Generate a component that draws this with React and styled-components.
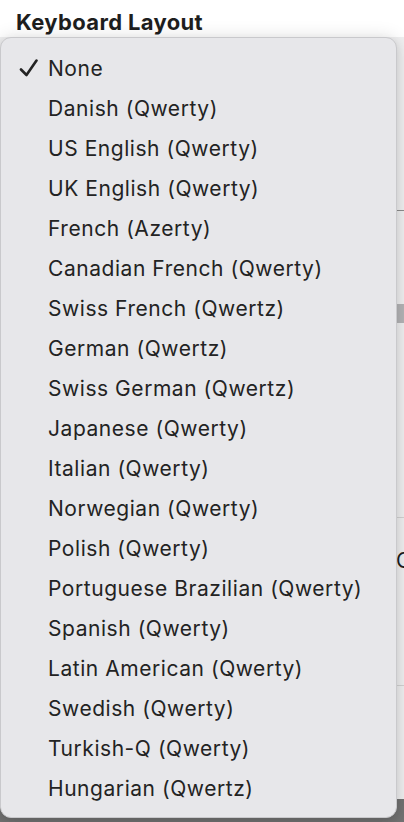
import React from 'react'
import styled, { createGlobalStyle } from 'styled-components'

const layouts = [
    'None',
    'Danish (Qwerty)',
    'US English (Qwerty)',
    'UK English (Qwerty)',
    'French (Azerty)',
    'Canadian French (Qwerty)',
    'Swiss French (Qwertz)',
    'German (Qwertz)',
    'Swiss German (Qwertz)',
    'Japanese (Qwerty)',
    'Italian (Qwerty)',
    'Norwegian (Qwerty)',
    'Polish (Qwerty)',
    'Portuguese Brazilian (Qwerty)',
    'Spanish (Qwerty)',
    'Latin American (Qwerty)',
    'Swedish (Qwerty)',
    'Turkish-Q (Qwerty)',
    'Hungarian (Qwertz)',
]

const GlobalStyle = createGlobalStyle`
    html, body {
        margin: 0;
        padding: 0;
        background: #ffffff;
    }
    body {
        font-family: Inter, "Liberation Sans", sans-serif;
        -webkit-font-smoothing: antialiased;
    }
`

const CheckIcon = () => (
    <svg width="20" height="18" viewBox="0 0 20 18">
        <path d="M2 10.5 L7.5 16 L17.5 1.5" fill="none" stroke="#232323" strokeWidth="2.6" strokeLinecap="round" strokeLinejoin="round" />
    </svg>
)

export default function App() {
    const selected = 'None'
    return (
        <Screen>
            <GlobalStyle />
            <Backdrop>
                <Header>
                    <Title>Keyboard Layout</Title>
                </Header>
                <Section $height={173} $line="#8d8d8d" />
                <Spacer $height={93} />
                <Slider />
                <Section $height={194} $line="#d2d2d2" />
                <FieldRow>
                    <FieldLabel>C</FieldLabel>
                </FieldRow>
                <Section $height={83} $line="#d2d2d2" />
                <Spacer $height={113} />
                <Footer />
            </Backdrop>
            <Menu>
                {layouts.map((name) => (
                    <MenuItem key={name}>
                        <CheckSlot>{name === selected && <CheckIcon />}</CheckSlot>
                        <ItemLabel>{name}</ItemLabel>
                    </MenuItem>
                ))}
            </Menu>
        </Screen>
    )
}

const Screen = styled.div`
    position: relative;
    width: 404px;
    height: 822px;
    overflow: hidden;
`

const Backdrop = styled.div`
    display: flex;
    flex-direction: column;
    height: 100%;
    background: #efeff0;
`

const Header = styled.div`
    height: 37px;
    flex-shrink: 0;
    background: #ffffff;
    padding-left: 16px;
    box-sizing: border-box;
`

const Title = styled.div`
    font-size: 22px;
    font-weight: 700;
    color: #1e1e1e;
    line-height: 1;
    padding-top: 11px;
    letter-spacing: 0.35px;
`

const Section = styled.div`
    height: ${(p) => p.$height}px;
    flex-shrink: 0;
    border-bottom: 1px solid ${(p) => p.$line};
`

const Spacer = styled.div`
    height: ${(p) => p.$height}px;
    flex-shrink: 0;
`

const Slider = styled.div`
    height: 19px;
    flex-shrink: 0;
    background: #b4b4b6;
`

const FieldRow = styled.div`
    height: 84px;
    display: flex;
    align-items: center;
    padding-left: 396px;
    flex-shrink: 0;
    box-sizing: border-box;
`

const FieldLabel = styled.span`
    font-size: 21px;
    color: #1e1e1e;
    white-space: nowrap;
`

const Footer = styled.div`
    flex: 1;
    background: #727272;
`

const Menu = styled.div`
    position: absolute;
    top: 37px;
    left: 0;
    width: 397px;
    height: 781px;
    box-sizing: border-box;
    padding: 10px 0 11px;
    background: #e7e7ea;
    border: 1px solid #c9c9cc;
    border-radius: 11px;
    box-shadow: 0 0 18px rgba(0, 0, 0, 0.12), 0 4px 10px rgba(0, 0, 0, 0.1);
    display: flex;
    flex-direction: column;
`

const MenuItem = styled.div`
    height: 40px;
    display: flex;
    align-items: center;
    flex-shrink: 0;
`

const CheckSlot = styled.div`
    width: 47px;
    display: flex;
    justify-content: flex-end;
    padding-right: 9px;
    box-sizing: border-box;
`

const ItemLabel = styled.span`
    font-size: 21px;
    color: #232323;
    letter-spacing: 0.55px;
    white-space: nowrap;
`
